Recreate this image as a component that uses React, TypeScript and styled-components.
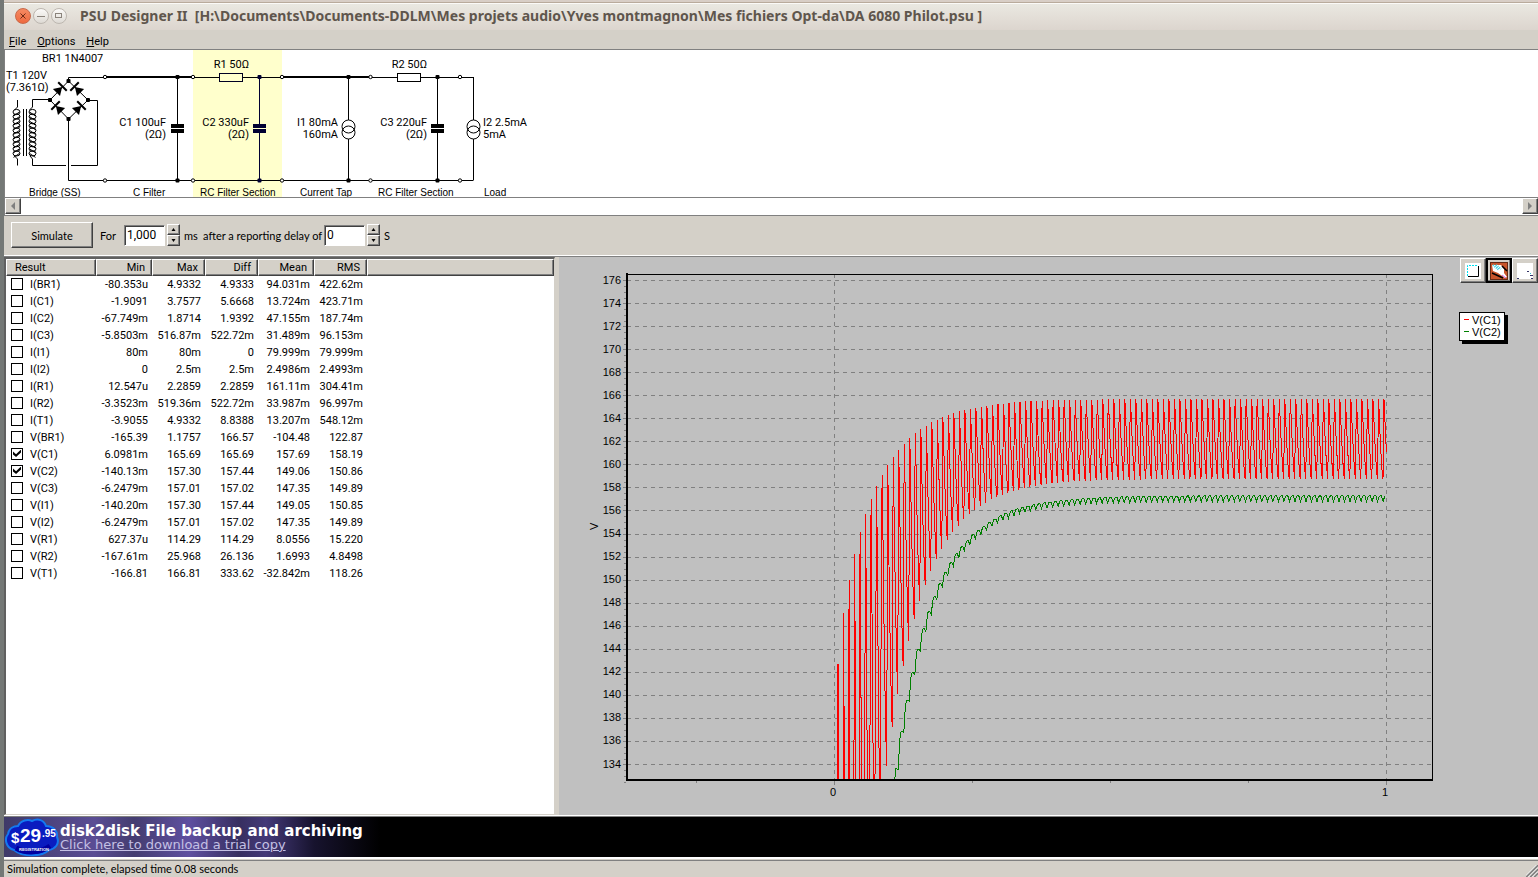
import React, { useState } from "react";
import styled, { createGlobalStyle, css } from "styled-components";

const face = "#d4d0c8";
const uiFont = `Roboto, "Liberation Sans", sans-serif`;
const proseFont = `Lato, "Liberation Sans", sans-serif`;

const GlobalStyle = createGlobalStyle`
  * { box-sizing: border-box; }
  body { margin: 0; background: #6c706e; font: 11px/13px ${uiFont}; color: #000; }
  button, input { font: inherit; color: inherit; }
`;

const raised = css`
  border: 1px solid;
  border-color: #fff #404040 #404040 #fff;
  box-shadow: inset -1px -1px 0 #808080;
`;

const Window = styled.div`
  min-height: 100vh;
  display: flex;
  flex-direction: column;
  background: ${face};
  border-left: 4px solid #747876;
`;

const TitleBar = styled.header`
  height: 30px;
  display: flex;
  align-items: center;
  padding: 0 0 0 11px;
  border-top: 2px solid #d8cec6;
  background: linear-gradient(#b9ab9c 1px, #fbfaf8 1px, #fbfaf8 2px, #eae8e1 2px, #dcd5ce);
`;

const WindowButton = styled.button<{ $close?: boolean }>`
  width: 16px;
  height: 16px;
  margin-right: 2px;
  padding: 0;
  display: grid;
  place-items: center;
  border: 1px solid ${(p) => (p.$close ? "#c9694a" : "#bdb7b0")};
  border-radius: 50%;
  background: ${(p) =>
    p.$close ? "linear-gradient(#f58a62, #ee6a40)" : "linear-gradient(#fbfaf8, #dedad4)"};
`;

const Title = styled.h1`
  margin: 0 0 0 11px;
  font: 700 14px/18px "Noto Sans", "Open Sans", sans-serif;
  color: #5f564d;
  white-space: pre;
`;

const MenuBar = styled.nav`
  height: 20px;
  display: flex;
  align-items: center;
  gap: 11px;
  padding: 3px 5px 0;
  border-bottom: 1px solid #808080;
`;

const MenuButton = styled.button`
  padding: 0;
  border: 0;
  background: none;
  &::first-letter { text-decoration: underline; }
`;

const CircuitPane = styled.section`
  height: 148px;
  overflow: hidden;
  background: #fff;
  border-left: 1px solid #808080;
  border-bottom: 1px solid #808080;
  svg { display: block; }
`;

const ScrollBar = styled.div`
  height: 17px;
  display: flex;
  justify-content: space-between;
  background: #fff;
  border-left: 1px solid #808080;
`;

const ScrollButton = styled.button`
  ${raised}
  width: 16px;
  height: 16px;
  padding: 0;
  display: grid;
  place-items: center;
  background: ${face};
`;

const Toolbar = styled.form`
  height: 42px;
  display: flex;
  align-items: center;
  padding: 0 7px 2px;
  border-top: 1px solid #808080;
  border-bottom: 1px solid #808080;
  box-shadow: inset 0 -1px 0 #fff;
  font-family: ${proseFont};
`;

const SimulateButton = styled.button`
  ${raised}
  width: 82px;
  height: 26px;
  margin-right: 7px;
  background: ${face};
`;

const FieldLabel = styled.label<{ $width: number }>`
  width: ${(p) => p.$width}px;
  white-space: nowrap;
`;

const NumberField = styled.input`
  width: 41px;
  height: 21px;
  margin-right: 2px;
  padding: 0 2px 1px;
  border: 1px solid;
  border-color: #808080 #fff #fff #808080;
  box-shadow: inset 1px 1px 0 #404040;
  background: #fff;
  font: 12px ${uiFont};
`;

const Spinner = styled.span`
  display: flex;
  flex-direction: column;
  margin-right: 4px;
`;

const SpinButton = styled.button`
  ${raised}
  width: 13px;
  height: 11px;
  padding: 0;
  display: grid;
  place-items: center;
  background: ${face};
`;

const Unit = styled.span`
  width: 19px;
`;

const Split = styled.main`
  flex: 1;
  display: flex;
  min-height: 0;
`;

const ResultPane = styled.section`
  flex: 0 0 551px;
  margin-right: 4px;
  background: #fff;
  border: 1px solid;
  border-width: 2px 1px 1px 2px;
  border-color: #606060 ${face} ${face} #606060;
`;

const Table = styled.table`
  width: 100%;
  table-layout: fixed;
  border-collapse: separate;
  border-spacing: 0;
`;

const HeadCell = styled.th<{ $w?: number; $left?: boolean }>`
  ${raised}
  width: ${(p) => (p.$w ? `${p.$w}px` : "auto")};
  height: 17px;
  padding: ${(p) => (p.$left ? "0 0 0 8px" : "0 6px 0 0")};
  background: ${face};
  font-weight: 400;
  text-align: ${(p) => (p.$left ? "left" : "right")};
`;

const Cell = styled.td`
  height: 17px;
  padding: 0 4px 0 0;
  text-align: right;
`;

const NameCell = styled.td`
  height: 17px;
  padding: 0 0 0 5px;
`;

const NameLabel = styled.label`
  display: flex;
  align-items: center;
  gap: 7px;
`;

const Tick = styled.input`
  appearance: none;
  width: 12px;
  height: 12px;
  margin: 0 0 2px;
  border: 1px solid #000;
  background: #fff;
  &:checked::after {
    content: "";
    display: block;
    width: 8px;
    height: 8px;
    margin: 1px;
    background: #000;
    clip-path: polygon(0 25%, 38% 60%, 100% 0, 100% 38%, 38% 95%, 0 62%);
  }
`;

const ChartPane = styled.section`
  flex: 1;
  min-width: 0;
  display: flex;
  background: #c0c0c0;
`;

const PlotArea = styled.div`
  flex: 1;
  min-width: 0;
  svg { display: block; width: 100%; height: 100%; }
`;

const ChartSide = styled.aside`
  width: 79px;
  display: flex;
  flex-direction: column;
  align-items: flex-start;
`;

const ToolRow = styled.div`
  display: flex;
  margin: 1px 0 29px 1px;
`;

const ToolButton = styled.button<{ $active?: boolean }>`
  ${raised}
  width: 26px;
  height: 25px;
  padding: 0;
  display: grid;
  place-items: center;
  background: ${face};
  ${(p) => p.$active && css`border: 2px solid #000;`}
`;

const Legend = styled.ul`
  margin: 0;
  padding: 1px 3px 2px 4px;
  list-style: none;
  background: #fff;
  border: 1px solid #000;
  box-shadow: 3px 3px 0 #000;
  font: 11px/12px "Liberation Sans", sans-serif;
`;

const LegendItem = styled.li<{ $color: string }>`
  display: flex;
  align-items: center;
  gap: 3px;
  &::before {
    content: "";
    width: 5px;
    border-top: 1px solid ${(p) => p.$color};
    margin-bottom: 1px;
  }
`;

const Banner = styled.a`
  height: 42px;
  display: flex;
  align-items: center;
  gap: 1px;
  border-top: 1px solid #fff;
  box-shadow: inset 0 1px 0 #808080;
  background: linear-gradient(90deg, #3f3a68, #5a4d94 90px, #443d70 130px, #5f50a0 185px, #372f60 235px, #443978 262px, #17132e 310px, #000 376px);
  color: #fff;
  text-decoration: none;
  font-family: "DejaVu Sans", sans-serif;
`;

const BannerText = styled.span`
  display: flex;
  flex-direction: column;
  padding-top: 2px;
`;

const BannerHead = styled.strong`
  font-size: 15px;
  line-height: 14px;
`;

const BannerLink = styled.span`
  font-size: 13px;
  line-height: 14px;
  color: #c4c0e4;
  text-decoration: underline;
`;

const StatusBar = styled.footer`
  height: 20px;
  display: flex;
  justify-content: space-between;
  align-items: flex-end;
  padding-left: 3px;
  border-top: 2px solid #fff;
  box-shadow: inset 0 1px 0 ${face}, inset 0 2px 0 #808080;
  font-family: ${proseFont};
  p { margin: 0 0 2px; }
`;

/* ---------- circuit ---------- */

const Label = styled.text`
  font: 11px ${uiFont};
`;

const Caption = styled.text`
  font: 10px "Liberation Sans", sans-serif;
`;

const Terminal = ({ x, y }: { x: number; y: number }) => (
  <circle cx={x} cy={y} r={1.7} fill="#fff" stroke="#000" />
);

const Joint = ({ x, y, color = "#000" }: { x: number; y: number; color?: string }) => (
  <rect x={x - 2} y={y - 2} width={4} height={4} rx={1} fill={color} />
);

const Capacitor = ({ x, color = "#000" }: { x: number; color?: string }) => (
  <g fill={color}>
    <path d={`M${x} 77V125M${x} 132V180`} stroke={color} />
    <rect x={x - 6.5} y={124} width={13} height={4} />
    <rect x={x - 6.5} y={129} width={13} height={4} />
    <Joint x={x} y={77} color={color} />
    <Joint x={x} y={180.5} color={color} />
  </g>
);

const CurrentSource = ({ x, joints }: { x: number; joints?: boolean }) => (
  <g fill="none" stroke="#000">
    <path d={`M${x} 77V120M${x} 139V180`} />
    <circle cx={x} cy={126.5} r={6.5} />
    <circle cx={x} cy={132.5} r={6.5} />
    {joints && (
      <g stroke="none">
        <Joint x={x} y={77} />
        <Joint x={x} y={180.5} />
      </g>
    )}
  </g>
);

const Diode = ({ x, y, turn }: { x: number; y: number; turn: number }) => (
  <g transform={`translate(${x} ${y}) rotate(${turn})`}>
    <path d="M-5 -5L3 0L-5 5Z" />
    <path d="M3.500 -6V6" stroke="#000" strokeWidth={2} />
  </g>
);

const Coil = ({ x, flip }: { x: number; flip?: boolean }) => (
  <g fill="none" stroke="#000">
    {Array.from({ length: 10 }, (_, i) => (
      <g key={i}>
        <ellipse cx={x} cy={112 + i * 4.6} rx={3.5} ry={2.6} />
        <path d={flip ? `M${x - 3} ${112 + i * 4.6}l6 4` : `M${x + 3} ${112 + i * 4.6}l-6 4`} />
      </g>
    ))}
  </g>
);

const Circuit = () => (
  <svg width="560" height="147" viewBox="5 50 560 147" role="img" aria-label="Power supply circuit">
    <rect x={193} y={50} width={89} height={147} fill="#ffffcc" />

    <path d="M17.500 100V107l-3 3M17.500 165.500V159l-3 -3" fill="none" stroke="#000" />
    <path d="M23.500 109V156M26.500 109V156" stroke="#000" />
    <Coil x={16.5} />
    <Coil x={32.5} flip />
    <path
      d="M50 99.500H32.500V107l-3 3M30 156l2.500 3V165.500H66M71 165.500H97.500V100.500H88M68.500 119V180.500H473.500"
      fill="none"
      stroke="#000"
    />
    <path d="M50 100L68.500 81L88 100L68.500 119Z" fill="none" stroke="#000" />
    <Diode x={60} y={89} turn={-45} />
    <Diode x={77} y={89} turn={-135} />
    <Diode x={58} y={108} turn={-135} />
    <Diode x={79} y={108} turn={-45} />
    <Joint x={68.5} y={81} />
    <Joint x={50} y={100} />
    <Joint x={88} y={100} />
    <Joint x={68.5} y={119} />
    <path d="M68.500 81V77.500H105" fill="none" stroke="#000" />

    <path d="M105 77H193M282 77H370" stroke="#000" strokeWidth={2} />
    <path d="M193 77.500H219M242 77.500H282M370 77.500H397M420 77.500H473.500" stroke="#000" />
    <rect x={219.5} y={73.5} width={23} height={8} fill="none" stroke="#002" />
    <rect x={397.5} y={73.5} width={23} height={8} fill="#fff" stroke="#000" />

    <Capacitor x={177.5} />
    <Capacitor x={259.5} color="#000033" />
    <Capacitor x={437.5} />
    <CurrentSource x={348.5} joints />
    <CurrentSource x={473.5} />
    {[105, 193, 282, 370.5, 460].map((x) => (
      <g key={x}>
        <Terminal x={x} y={77} />
        <Terminal x={x} y={180.5} />
      </g>
    ))}

    <Label x={42} y={62}>BR1 1N4007</Label>
    <Label x={6} y={79}>T1 120V</Label>
    <Label x={6} y={91}>(7.361Ω)</Label>
    <Label x={166} y={126} textAnchor="end">C1 100uF</Label>
    <Label x={166} y={138} textAnchor="end">(2Ω)</Label>
    <Label x={249} y={68} textAnchor="end">R1 50Ω</Label>
    <Label x={249} y={126} textAnchor="end">C2 330uF</Label>
    <Label x={249} y={138} textAnchor="end">(2Ω)</Label>
    <Label x={338} y={126} textAnchor="end">I1 80mA</Label>
    <Label x={338} y={138} textAnchor="end">160mA</Label>
    <Label x={427} y={68} textAnchor="end">R2 50Ω</Label>
    <Label x={427} y={126} textAnchor="end">C3 220uF</Label>
    <Label x={427} y={138} textAnchor="end">(2Ω)</Label>
    <Label x={483} y={126}>I2 2.5mA</Label>
    <Label x={483} y={138}>5mA</Label>

    <Caption x={29} y={196}>Bridge (SS)</Caption>
    <Caption x={133} y={196}>C Filter</Caption>
    <Caption x={200} y={196}>RC Filter Section</Caption>
    <Caption x={300} y={196}>Current Tap</Caption>
    <Caption x={378} y={196}>RC Filter Section</Caption>
    <Caption x={484} y={196}>Load</Caption>
  </svg>
);

/* ---------- chart ---------- */

const xOf = (seconds: number) => 275.5 + seconds * 552;
const yOf = (volts: number) => 23.5 + (176 - volts) * 11.524;

/* Settles a series towards its steady value once the listed samples run out. */
const settle = (known: number[], final: number, tau: number) => (k: number) => {
  if (k < known.length) return known[k];
  const last = known[known.length - 1];
  return final - (final - last) * Math.exp(-(k - known.length + 1) / tau);
};

const c1Peak = settle(
  [142.68, 147.16, 150.02, 152.28, 154.16, 155.75, 157.05, 158.15, 159.13, 160, 160.7, 161.3,
    161.82, 162.35, 162.78, 163.13, 163.39, 163.73, 163.91, 164.17, 164.34, 164.51, 164.69,
    164.77, 164.86, 164.95, 165.03, 165.12, 165.21, 165.3, 165.32, 165.38, 165.41, 165.47],
  165.69, 6
);
const c1Trough = settle(
  [60, 80, 94, 104, 112, 119, 125, 129.8, 133.85, 137.24, 140.1, 142.53, 144.7, 146.61, 148.17,
    149.56, 150.77, 151.82, 152.68, 153.46, 154.16, 154.68, 155.29, 155.72, 156.07, 156.42,
    156.68, 157.02, 157.2, 157.37, 157.54, 157.72, 157.8, 157.98, 158.06, 158.15],
  158.76, 6
);
const c2Crest = settle(
  [133.62, 136.89, 139.55, 141.98, 144, 145.77, 147.3, 148.58, 149.73, 150.69, 151.53, 152.28,
    152.89, 153.44, 153.93, 154.33, 154.68, 155.03, 155.29, 155.58, 155.81, 156.01, 156.18,
    156.3, 156.42, 156.53],
  157.33, 8
);
const c2Sag = settle(
  [133.6, 136.77, 139.49, 141.81, 143.83, 145.57, 147.01, 148.34, 149.44, 150.43, 151.21, 151.99,
    152.57, 153.09, 153.61, 153.98, 154.33, 154.68, 155, 155.23, 155.37, 155.6, 155.81, 155.9,
    156.01, 156.13],
  156.82, 8
);

const join = (pts: [number, number][]) =>
  pts.map(([t, v]) => `${xOf(t).toFixed(1)},${yOf(v).toFixed(1)}`).join(" ");

const decay: [number, number][] = [[0, 0], [0.1, 0.12], [0.25, 0.38], [0.45, 0.66], [0.65, 0.88], [0.82, 1]];

const c1Points = () => {
  const pts: [number, number][] = [[0.005, 0]];
  for (let k = 0; k < 100; k++) {
    const top = c1Peak(k);
    const drop = top - c1Trough(k);
    const squeeze = k < 8 ? 0.75 : 1;
    decay.forEach(([f, d]) => {
      const t = 0.0064 + (k + f * squeeze) * 0.00999;
      if (t <= 1.001) pts.push([t, top - d * drop]);
    });
  }
  return join(pts);
};

const c2Points = () => {
  const pts: [number, number][] = [[0.1085, 132.3]];
  for (let k = 0; k < 89; k++) {
    const t = 0.1108 + k * 0.00998;
    const crest = c2Crest(k);
    const sag = c2Sag(k);
    const climb = c2Crest(k + 1) - sag;
    pts.push(
      [t, crest],
      [t + 0.0018, crest],
      [t + 0.0032, (crest + sag) / 2],
      [t + 0.0048, sag],
      [t + 0.0064, sag + climb * 0.5],
      [t + 0.0082, sag + climb * 0.9]
    );
  }
  return join(pts);
};

const AxisText = styled.text`
  font: 11px "Liberation Sans", sans-serif;
`;

const voltTicks = Array.from({ length: 22 }, (_, i) => 176 - i * 2);

const Plot = () => (
  <svg viewBox="0 0 900 558" preserveAspectRatio="xMinYMin meet" role="img" aria-label="Voltage over time">
    <defs>
      <clipPath id="plot-frame">
        <rect x={69} y={17} width={806} height={505} />
      </clipPath>
    </defs>
    <g stroke="#808080" shapeRendering="crispEdges">
      {voltTicks.map((v) => {
        const y = Math.round(yOf(v) - 0.5) + 0.5;
        return (
          <g key={v}>
            <path d={`M64 ${y}H72`} />
            <path d={`M76 ${y}H873`} strokeDasharray="4 4" />
            {[1, 2, 3].map((n) => (
              <path key={n} d={`M65 ${Math.round(y + n * 5.76) + 0.5}h2`} />
            ))}
          </g>
        );
      })}
      {[0, 1].map((s) => (
        <path key={s} d={`M${xOf(s)} 17V522`} strokeDasharray="4 4" />
      ))}
      {[-0.25, 0, 0.25, 0.5, 0.75, 1].map((s) => (
        <path key={s} d={`M${xOf(s)} 524v${s % 1 ? 2 : 4}`} />
      ))}
    </g>
    <g fill="none" shapeRendering="crispEdges" clipPath="url(#plot-frame)">
      <polyline points={c1Points()} stroke="#ff0000" />
      <polyline points={c2Points()} stroke="#008000" />
    </g>
    <g stroke="#000" shapeRendering="crispEdges">
      <path d="M67 17.500H874M873.500 17V523" fill="none" />
      <path d="M68 16V524M67 523H874" strokeWidth={2} />
    </g>
    {voltTicks.map((v) => (
      <AxisText key={v} x={62} y={Math.round(yOf(v)) + 3} textAnchor="end">{v}</AxisText>
    ))}
    <AxisText x={274} y={539} textAnchor="middle">0</AxisText>
    <AxisText x={826} y={539} textAnchor="middle">1</AxisText>
    <AxisText transform="translate(39 273) rotate(-90)">V</AxisText>
  </svg>
);

/* ---------- results ---------- */

const results: [string, string, string, string, string, string][] = [
  ["I(BR1)", "-80.353u", "4.9332", "4.9333", "94.031m", "422.62m"],
  ["I(C1)", "-1.9091", "3.7577", "5.6668", "13.724m", "423.71m"],
  ["I(C2)", "-67.749m", "1.8714", "1.9392", "47.155m", "187.74m"],
  ["I(C3)", "-5.8503m", "516.87m", "522.72m", "31.489m", "96.153m"],
  ["I(I1)", "80m", "80m", "0", "79.999m", "79.999m"],
  ["I(I2)", "0", "2.5m", "2.5m", "2.4986m", "2.4993m"],
  ["I(R1)", "12.547u", "2.2859", "2.2859", "161.11m", "304.41m"],
  ["I(R2)", "-3.3523m", "519.36m", "522.72m", "33.987m", "96.997m"],
  ["I(T1)", "-3.9055", "4.9332", "8.8388", "13.207m", "548.12m"],
  ["V(BR1)", "-165.39", "1.1757", "166.57", "-104.48", "122.87"],
  ["V(C1)", "6.0981m", "165.69", "165.69", "157.69", "158.19"],
  ["V(C2)", "-140.13m", "157.30", "157.44", "149.06", "150.86"],
  ["V(C3)", "-6.2479m", "157.01", "157.02", "147.35", "149.89"],
  ["V(I1)", "-140.20m", "157.30", "157.44", "149.05", "150.85"],
  ["V(I2)", "-6.2479m", "157.01", "157.02", "147.35", "149.89"],
  ["V(R1)", "627.37u", "114.29", "114.29", "8.0556", "15.220"],
  ["V(R2)", "-167.61m", "25.968", "26.136", "1.6993", "4.8498"],
  ["V(T1)", "-166.81", "166.81", "333.62", "-32.842m", "118.26"],
];

const columns: [string, number][] = [["Min", 56], ["Max", 53], ["Diff", 53], ["Mean", 56], ["RMS", 53]];

const ResultTable = () => {
  const [shown, setShown] = useState<string[]>(["V(C1)", "V(C2)"]);
  const toggle = (name: string) =>
    setShown((s) => (s.includes(name) ? s.filter((n) => n !== name) : [...s, name]));
  return (
    <Table>
      <thead>
        <tr>
          <HeadCell $w={90} $left>Result</HeadCell>
          {columns.map(([name, w]) => (
            <HeadCell key={name} $w={w}>{name}</HeadCell>
          ))}
          <HeadCell aria-hidden="true" />
        </tr>
      </thead>
      <tbody>
        {results.map(([name, ...values]) => (
          <tr key={name}>
            <NameCell>
              <NameLabel>
                <Tick type="checkbox" checked={shown.includes(name)} onChange={() => toggle(name)} />
                {name}
              </NameLabel>
            </NameCell>
            {values.map((v, i) => (
              <Cell key={i}>{v}</Cell>
            ))}
          </tr>
        ))}
      </tbody>
    </Table>
  );
};

const Spin = ({ label }: { label: string }) => (
  <Spinner>
    <SpinButton type="button" aria-label={`Increase ${label}`}>
      <svg width="5" height="3"><path d="M0.500 3L2.500 0L4.500 3Z" /></svg>
    </SpinButton>
    <SpinButton type="button" aria-label={`Decrease ${label}`}>
      <svg width="5" height="3"><path d="M0.500 0L2.500 3L4.500 0Z" /></svg>
    </SpinButton>
  </Spinner>
);

const PriceBadge = () => (
  <svg width="55" height="40" viewBox="0 0 55 40" aria-hidden="true">
    <path
      d="M10 33C2 31 0 22 4 17C5 11 10 9 14 9C17 3 24 2 28 4C34 1 40 3 42 9C49 9 54 14 53 20C56 27 51 32 45 33C38 40 18 40 10 33Z"
      fill="#0a1cc0"
      stroke="#1478f0"
      strokeWidth={2}
    />
    <path d="M12 31C22 37 36 36 46 29" fill="none" stroke="#0000a0" strokeWidth={5} />
    <g fill="#fff" fontFamily="Liberation Sans, sans-serif" fontWeight="700">
      <text x="7" y="26" fontSize="15">$</text>
      <text x="16" y="25" fontSize="19">29</text>
      <text x="38" y="20" fontSize="10">.95</text>
      <text x="15" y="34" fontSize="4">REGISTRATION</text>
    </g>
  </svg>
);

export default function App() {
  return (
    <Window>
      <GlobalStyle />
      <TitleBar>
        <WindowButton $close aria-label="Close">
          <svg width="6" height="6"><path d="M0.500 0.500L5.500 5.500M5.500 0.500L0.500 5.500" stroke="#6d2c17" /></svg>
        </WindowButton>
        <WindowButton aria-label="Minimize">
          <svg width="8" height="6"><path d="M0 3.500H8" stroke="#8a837b" /></svg>
        </WindowButton>
        <WindowButton aria-label="Maximize">
          <svg width="8" height="6"><rect x="0.500" y="0.500" width="6" height="4" fill="none" stroke="#8a837b" /></svg>
        </WindowButton>
        <Title>{"PSU Designer II  [H:\\Documents\\Documents-DDLM\\Mes projets audio\\Yves montmagnon\\Mes fichiers Opt-da\\DA 6080 Philot.psu ]"}</Title>
      </TitleBar>

      <MenuBar>
        <MenuButton>File</MenuButton>
        <MenuButton>Options</MenuButton>
        <MenuButton>Help</MenuButton>
      </MenuBar>

      <CircuitPane><Circuit /></CircuitPane>
      <ScrollBar>
        <ScrollButton aria-label="Scroll left">
          <svg width="6" height="8"><path d="M5 0V8L1 4Z" fill="#808080" /></svg>
        </ScrollButton>
        <ScrollButton aria-label="Scroll right">
          <svg width="6" height="8"><path d="M1 0V8L5 4Z" fill="#808080" /></svg>
        </ScrollButton>
      </ScrollBar>

      <Toolbar onSubmit={(e) => e.preventDefault()}>
        <SimulateButton>Simulate</SimulateButton>
        <FieldLabel htmlFor="duration" $width={24}>For</FieldLabel>
        <NumberField id="duration" defaultValue="1,000" />
        <Spin label="duration" />
        <Unit>ms</Unit>
        <FieldLabel htmlFor="delay" $width={121}>after a reporting delay of</FieldLabel>
        <NumberField id="delay" defaultValue="0" />
        <Spin label="delay" />
        <Unit>S</Unit>
      </Toolbar>

      <Split>
        <ResultPane><ResultTable /></ResultPane>
        <ChartPane>
          <PlotArea><Plot /></PlotArea>
          <ChartSide>
            <ToolRow>
              <ToolButton aria-label="Select">
                <svg width="16" height="16">
                  <rect width="16" height="16" fill="#fff" />
                  <path d="M2.500 13V2.500H13" fill="none" stroke="#00e0f0" strokeDasharray="2 1" />
                  <path d="M13.500 3V13.500H3" fill="none" stroke="#000" />
                </svg>
              </ToolButton>
              <ToolButton $active aria-label="Zoom">
                <svg width="18" height="18">
                  <rect width="18" height="18" fill="#c8552b" />
                  <rect x="0.500" y="0.500" width="17" height="17" fill="none" stroke="#000" strokeDasharray="1 1" />
                  <path d="M2 3H11L14 7V11L17 15L15 16L8 11L3 9Z" fill="#fff" />
                  <path d="M3 3L9 8M6 3L11 7" stroke="#30d0e0" strokeDasharray="1 1" strokeWidth={2} />
                  <path d="M12 4L17 9M2 11L13 16" stroke="#000" strokeWidth={1.5} />
                  <path d="M12 13L16 16" stroke="#d060e0" />
                </svg>
              </ToolButton>
              <ToolButton aria-label="Pan">
                <svg width="16" height="16">
                  <rect width="16" height="16" fill="#fff" />
                  <path d="M0 15.500H2M10 8.500H12M13 12.500H16M14 15.500H16" stroke="#336" />
                  <path d="M13 10.500H14" stroke="#30c0d0" />
                </svg>
              </ToolButton>
            </ToolRow>
            <Legend>
              <LegendItem $color="#ff0000">V(C1)</LegendItem>
              <LegendItem $color="#008000">V(C2)</LegendItem>
            </Legend>
          </ChartSide>
        </ChartPane>
      </Split>

      <Banner href="#disk2disk">
        <PriceBadge />
        <BannerText>
          <BannerHead>disk2disk File backup and archiving</BannerHead>
          <BannerLink>Click here to download a trial copy</BannerLink>
        </BannerText>
      </Banner>

      <StatusBar>
        <p>Simulation complete, elapsed time 0.08 seconds</p>
        <svg width="12" height="12" aria-hidden="true">
          <path d="M0 12L12 0M4 12L12 4M8 12L12 8" stroke="#808080" strokeWidth={2} />
          <path d="M-1.500 12L12 -1.500M2.500 12L12 2.500M6.500 12L12 6.500" stroke="#fff" />
        </svg>
      </StatusBar>
    </Window>
  );
}
